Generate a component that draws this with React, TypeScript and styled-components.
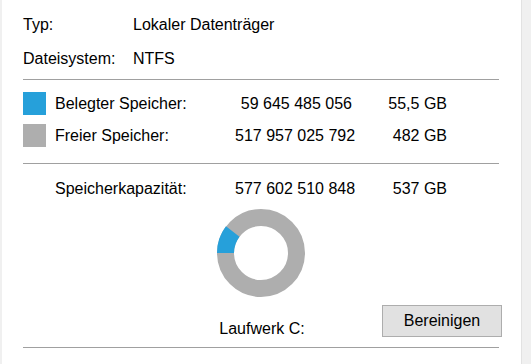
import React from 'react'
import styled, { createGlobalStyle } from 'styled-components'

const GlobalStyle = createGlobalStyle`
  html, body {
    margin: 0;
    padding: 0;
    background: #f0f0f0;
  }
  body {
    font-family: 'Liberation Sans', Arial, sans-serif;
    font-size: 16px;
    color: #000;
  }
`

const USED_COLOR = '#26a0da'
const FREE_COLOR = '#aeaeae'

const Panel = styled.div`
  box-sizing: border-box;
  margin-left: 2px;
  width: 520px;
  height: 364px;
  background: #fff;
  border-right: 1px solid #e2e2e2;
  padding: 8px 22px 0 21px;
  overflow: hidden;
`

const InfoGrid = styled.div`
  display: grid;
  grid-template-columns: 110px 1fr;
  grid-auto-rows: 34px;
  align-items: center;
  line-height: 18px;
`

const Separator = styled.div<{ $top: number }>`
  height: 1px;
  width: 476px;
  background: #a0a0a0;
  margin-top: ${(p) => p.$top}px;
`

const UsageGrid = styled.div<{ $top: number }>`
  display: grid;
  grid-template-columns: 23px 189px 117px 95px;
  grid-auto-rows: 32px;
  align-items: center;
  line-height: 18px;
  margin-top: ${(p) => p.$top}px;
`

const Swatch = styled.div<{ $color: string }>`
  width: 23px;
  height: 23px;
  align-self: start;
  margin-top: 4px;
  background: ${(p) => p.$color};
`

const Label = styled.span`
  padding-left: 9px;
  white-space: nowrap;
`

const Value = styled.span`
  text-align: right;
  white-space: nowrap;
`

const DriveArea = styled.div`
  display: grid;
  grid-template-columns: 1fr auto 1fr;
  align-items: end;
  width: 476px;
  margin-top: 4px;
`

const DriveColumn = styled.div`
  grid-column: 2;
  display: flex;
  flex-direction: column;
  align-items: center;
`

const DriveLabel = styled.div`
  margin-top: 23px;
  line-height: 18px;
  padding-left: 2px;
`

const Actions = styled.div`
  grid-column: 3;
  display: flex;
  justify-content: flex-end;
  margin-right: -3px;
`

const Button = styled.button`
  width: 120px;
  height: 32px;
  margin-bottom: 1px;
  background: #e1e1e1;
  border: 1px solid #adadad;
  border-radius: 0;
  font-family: inherit;
  font-size: 16px;
  color: #000;
  padding: 0;
`

function Donut({ used, total }: { used: number; total: number }) {
  const r = 35.5
  const circ = 2 * Math.PI * r
  const usedLen = (used / total) * circ
  return (
    <svg width="88" height="88" viewBox="0 0 88 88">
      <circle cx="44" cy="44" r={r} fill="none" stroke={FREE_COLOR} strokeWidth="17" />
      <circle
        cx="44"
        cy="44"
        r={r}
        fill="none"
        stroke={USED_COLOR}
        strokeWidth="17"
        strokeDasharray={`${usedLen} ${circ}`}
        transform="rotate(180 44 44)"
      />
    </svg>
  )
}

export default function App() {
  return (
    <>
      <GlobalStyle />
      <Panel>
        <InfoGrid>
          <span>Typ:</span>
          <span>Lokaler Datenträger</span>
          <span>Dateisystem:</span>
          <span>NTFS</span>
        </InfoGrid>
        <Separator $top={3} />
        <UsageGrid $top={8}>
          <Swatch $color={USED_COLOR} />
          <Label>Belegter Speicher:</Label>
          <Value>59 645 485 056</Value>
          <Value>55,5 GB</Value>
          <Swatch $color={FREE_COLOR} />
          <Label>Freier Speicher:</Label>
          <Value>517 957 025 792</Value>
          <Value>482 GB</Value>
        </UsageGrid>
        <Separator $top={11} />
        <UsageGrid $top={9}>
          <span />
          <Label>Speicherkapazität:</Label>
          <Value>577 602 510 848</Value>
          <Value>537 GB</Value>
        </UsageGrid>
        <DriveArea>
          <DriveColumn>
            <Donut used={55.5} total={537} />
            <DriveLabel>Laufwerk C:</DriveLabel>
          </DriveColumn>
          <Actions>
            <Button>Bereinigen</Button>
          </Actions>
        </DriveArea>
        <Separator $top={9} />
      </Panel>
    </>
  )
}
